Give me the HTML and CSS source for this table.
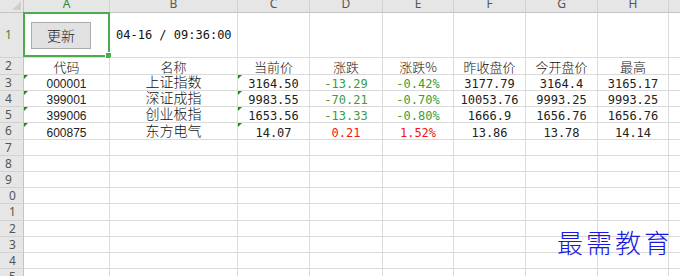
FILE: index.html
```html
<!DOCTYPE html>
<html lang="zh-CN">
<head>
<meta charset="utf-8">
<title>行情表</title>
<link rel="stylesheet" href="styles.css">
</head>
<body>
<div class="sheet">
  <div class="corner"></div>
  <div class="ch sel">A</div><div class="ch">B</div><div class="ch">C</div><div class="ch">D</div><div class="ch">E</div><div class="ch">F</div><div class="ch">G</div><div class="ch">H</div><div class="ch"></div>

  <div class="rh sel">1</div>
  <div class="c a1"><button class="btn" type="button">更新</button><span class="selbox"></span></div>
  <div class="c b1">04-16 / 09:36:00</div>
  <div class="c"></div><div class="c"></div><div class="c"></div><div class="c"></div><div class="c"></div><div class="c"></div><div class="c"></div>

  <div class="rh">2</div>
  <div class="c hd">代码</div><div class="c hd">名称</div><div class="c hd">当前价</div><div class="c hd">涨跌</div><div class="c hd">涨跌%</div><div class="c hd">昨收盘价</div><div class="c hd">今开盘价</div><div class="c hd">最高</div><div class="c"></div>

  <div class="rh">3</div>
  <div class="c code flag">000001</div><div class="c name">上证指数</div><div class="c n flag">3164.50</div><div class="c n dn">-13.29</div><div class="c n dn">-0.42%</div><div class="c n">3177.79</div><div class="c n">3164.4</div><div class="c n">3165.17</div><div class="c"></div>

  <div class="rh">4</div>
  <div class="c code flag">399001</div><div class="c name">深证成指</div><div class="c n flag">9983.55</div><div class="c n dn">-70.21</div><div class="c n dn">-0.70%</div><div class="c n">10053.76</div><div class="c n">9993.25</div><div class="c n">9993.25</div><div class="c"></div>

  <div class="rh">5</div>
  <div class="c code flag">399006</div><div class="c name">创业板指</div><div class="c n flag">1653.56</div><div class="c n dn">-13.33</div><div class="c n dn">-0.80%</div><div class="c n">1666.9</div><div class="c n">1656.76</div><div class="c n">1656.76</div><div class="c"></div>

  <div class="rh">6</div>
  <div class="c code flag">600875</div><div class="c name">东方电气</div><div class="c n flag">14.07</div><div class="c n up">0.21</div><div class="c n up">1.52%</div><div class="c n">13.86</div><div class="c n">13.78</div><div class="c n">14.14</div><div class="c"></div>

  <div class="rh">7</div><div class="c"></div><div class="c"></div><div class="c"></div><div class="c"></div><div class="c"></div><div class="c"></div><div class="c"></div><div class="c"></div><div class="c"></div>
  <div class="rh">8</div><div class="c"></div><div class="c"></div><div class="c"></div><div class="c"></div><div class="c"></div><div class="c"></div><div class="c"></div><div class="c"></div><div class="c"></div>
  <div class="rh">9</div><div class="c"></div><div class="c"></div><div class="c"></div><div class="c"></div><div class="c"></div><div class="c"></div><div class="c"></div><div class="c"></div><div class="c"></div>
  <div class="rh rh2">0</div><div class="c"></div><div class="c"></div><div class="c"></div><div class="c"></div><div class="c"></div><div class="c"></div><div class="c"></div><div class="c"></div><div class="c"></div>
  <div class="rh rh2">1</div><div class="c"></div><div class="c"></div><div class="c"></div><div class="c"></div><div class="c"></div><div class="c"></div><div class="c"></div><div class="c"></div><div class="c"></div>
  <div class="rh rh2">2</div><div class="c"></div><div class="c"></div><div class="c"></div><div class="c"></div><div class="c"></div><div class="c"></div><div class="c"></div><div class="c"></div><div class="c"></div>
  <div class="rh rh2">3</div><div class="c"></div><div class="c"></div><div class="c"></div><div class="c"></div><div class="c"></div><div class="c"></div><div class="c"></div><div class="c"></div><div class="c"></div>
  <div class="rh rh2">4</div><div class="c"></div><div class="c"></div><div class="c"></div><div class="c"></div><div class="c"></div><div class="c"></div><div class="c"></div><div class="c"></div><div class="c"></div>
  <div class="rh rh2">5</div><div class="c"></div><div class="c"></div><div class="c"></div><div class="c"></div><div class="c"></div><div class="c"></div><div class="c"></div><div class="c"></div><div class="c"></div>
</div>
<div class="mark">最需教育</div>
</body>
</html>
```

FILE: styles.css
```css
* { box-sizing: border-box; }
html, body { margin: 0; height: 100%; }
body {
  overflow: hidden;
  background: #fff;
  color: #111;
  font-family: "Noto Sans CJK SC", sans-serif;
  position: relative;
}
.sheet {
  display: grid;
  grid-template-columns: 24px 86px 128px 72px 73px 71px 72px 72px 71px 1fr;
  grid-template-rows: 21px 45px 17px 16px 16px 16px 17px 16px 16px 16px 16px 17px 16px 16px 16px 16px;
  margin-top: -8px;
  width: 700px;
}
.corner {
  background: #e6e6e6;
  border-right: 1px solid #c4c4c4;
  border-bottom: 1px solid #c4c4c4;
  position: relative;
}
.corner::after {
  content: "";
  position: absolute;
  right: 2px;
  bottom: 2px;
  border-style: solid;
  border-width: 0 0 9px 9px;
  border-color: transparent transparent #cfcfcf transparent;
}
.ch {
  background: #e6e6e6;
  border-right: 1px solid #d2d2d2;
  border-bottom: 1px solid #c4c4c4;
  display: flex;
  align-items: center;
  justify-content: center;
  padding-top: 3px;
  font: 12px "Noto Sans", sans-serif;
  color: #555;
}
.rh {
  background: #e6e6e6;
  border-right: 1px solid #c4c4c4;
  border-bottom: 1px solid #d2d2d2;
  display: flex;
  align-items: center;
  justify-content: center;
  padding-right: 6px;
  font: 12px "Noto Sans", sans-serif;
  line-height: 14px;
  color: #555;
}
.rh2 { padding-right: 0; padding-left: 2px; }
.sel { color: #2f8a3a; }

.c {
  border-right: 1px solid #dadada;
  border-bottom: 1px solid #dadada;
  display: flex;
  justify-content: center;
  align-items: flex-end;
  white-space: nowrap;
  position: relative;
}
.a1 {
  justify-content: flex-start;
  align-items: center;
  padding-left: 7px;
}
.btn {
  width: 60px;
  height: 27px;
  margin: 0;
  padding: 0;
  background: #e1e1e1;
  border: 1px solid #adadad;
  border-radius: 0;
  font: 14px "Noto Sans CJK SC", sans-serif;
  font-weight: 300;
  color: #222;
}
.selbox {
  position: absolute;
  left: -1px;
  top: -1px;
  right: -1px;
  bottom: 0;
  border: 2px solid #4cab4f;
  pointer-events: none;
}
.selbox::after {
  content: "";
  position: absolute;
  right: -4px;
  bottom: -4px;
  width: 5px;
  height: 5px;
  background: #4cab4f;
  border: 1px solid #fff;
  box-sizing: content-box;
}
.b1 {
  justify-content: flex-start;
  align-items: center;
  padding-left: 6px;
  font: 12px "DejaVu Sans Mono", monospace;
  color: #111;
}
.hd {
  font: 13px "Noto Sans CJK SC", sans-serif;
  font-weight: 300;
  line-height: 15px;
  color: #111;
}
.name {
  font: 14px "Noto Sans CJK SC", sans-serif;
  font-weight: 300;
  line-height: 15px;
  padding-bottom: 1px;
  color: #111;
}
.code {
  font: 12px "Liberation Sans", sans-serif;
  line-height: 11px;
  color: #222;
}
.n {
  font: 12px "DejaVu Sans Mono", monospace;
  line-height: 11px;
  color: #222;
}
.dn { color: #3d9c3d; }
.up { color: #f31414; }
.flag::before {
  content: "";
  position: absolute;
  left: 0;
  top: 0;
  border-style: solid;
  border-width: 4px 4px 0 0;
  border-color: #1f8a1f transparent transparent transparent;
}
.mark {
  position: absolute;
  left: 557px;
  top: 229px;
  font: 26px "Noto Sans CJK SC", sans-serif;
  font-weight: 300;
  line-height: 26px;
  letter-spacing: 3px;
  color: #1818e0;
  white-space: nowrap;
}
```
